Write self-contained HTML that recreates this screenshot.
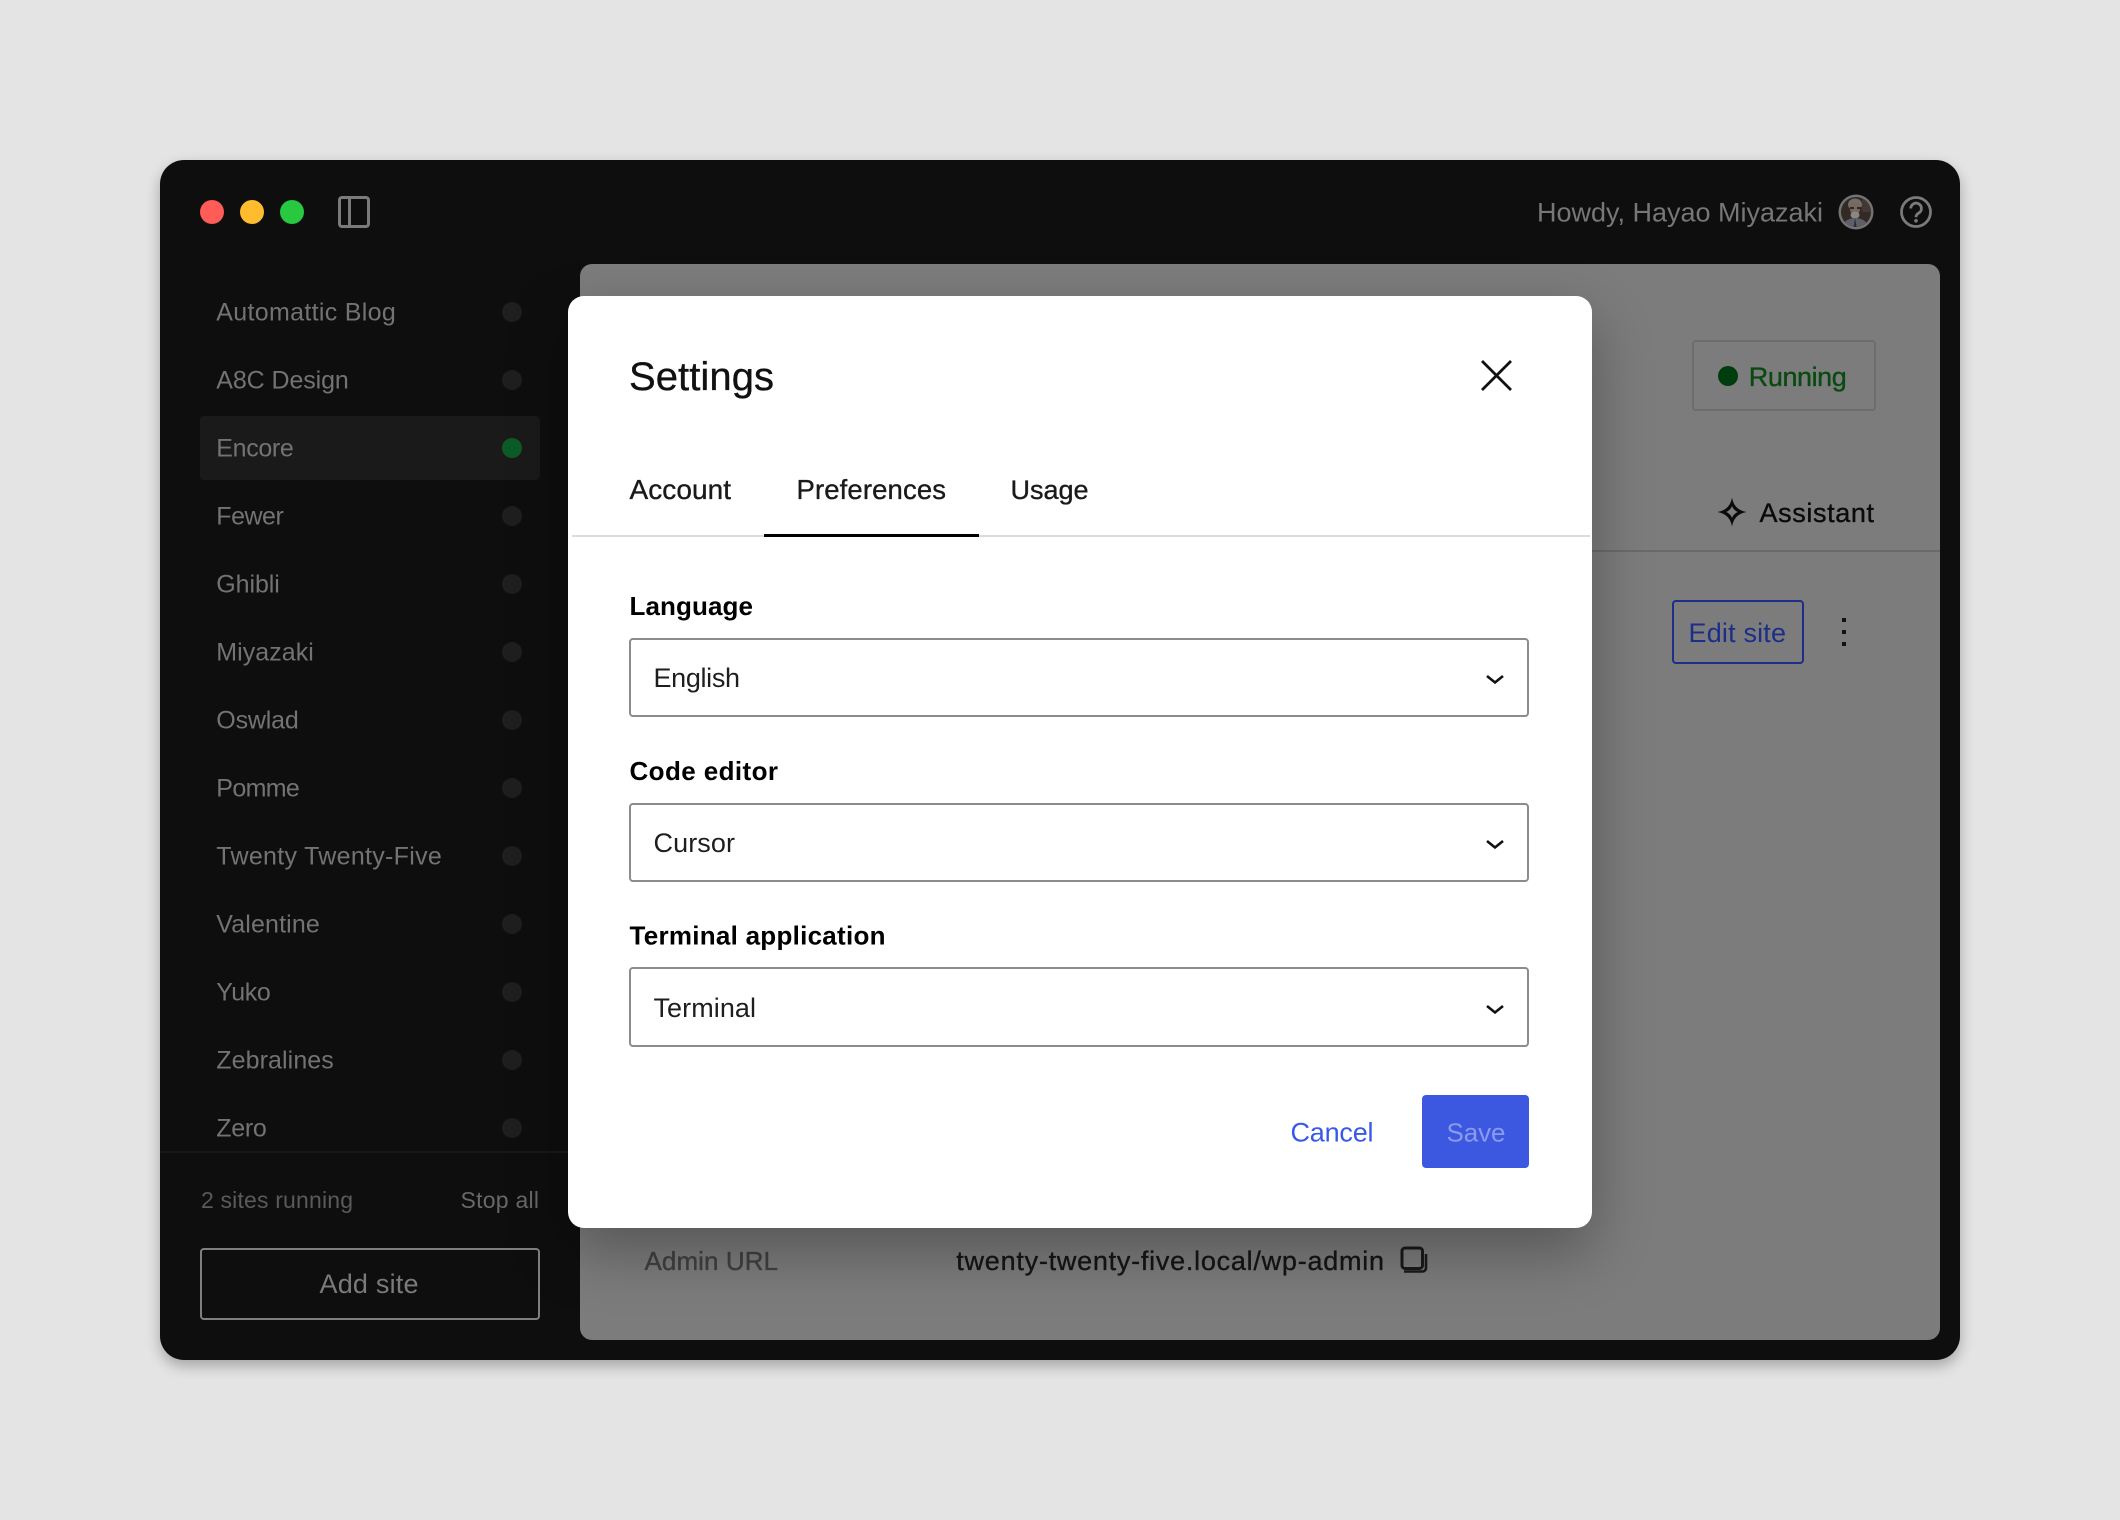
<!DOCTYPE html>
<html lang="en">
<head>
<meta charset="utf-8">
<title>Settings</title>
<style>
html,body{margin:0;padding:0;width:2120px;height:1520px;overflow:hidden;background:#e4e4e4}
div{position:absolute;box-sizing:border-box}
#win{left:160px;top:160px;width:1800px;height:1200px;background:#0e0e0e;border-radius:24px;box-shadow:0 6px 14px rgba(0,0,0,.28)}
#panel{left:580px;top:264px;width:1360px;height:1076px;background:#7c7c7c;border-radius:12px;overflow:hidden}
#active{left:200px;top:416px;width:340px;height:64px;background:#1a1a1a;border-radius:4px}
#sdiv{left:160px;top:1151px;width:410px;height:2px;background:#191919}
#add{left:200px;top:1248px;width:340px;height:72px;border:2px solid #808080;border-radius:4px}
#run{left:1692px;top:340px;width:184px;height:71px;border:2px solid #6c6c6c;border-radius:4px}
#pdiv{left:1590px;top:550px;width:350px;height:2px;background:#6a6a6a}
#edit{left:1672px;top:600px;width:132px;height:64px;border:2px solid #1c2e88;border-radius:4px}
#modal{left:568px;top:296px;width:1024px;height:932px;background:#fff;border-radius:16px;box-shadow:0 24px 60px rgba(0,0,0,.3)}
#tdiv{left:572px;top:535px;width:1018px;height:2px;background:#dcdcdc}
#tact{left:764px;top:534px;width:215px;height:3px;background:#000}
.sel{left:629px;width:900px;height:80px;border:2px solid #8c8c8c;border-radius:4px;background:#fff}
#save{left:1422px;top:1095px;width:107px;height:73px;background:#3c58e0;border-radius:4px}
svg{position:absolute;left:0;top:0}
text{font-family:"Liberation Sans",sans-serif;font-size:27px}
.s{font-size:25px;fill:#737373}
.m{stroke-width:.35;paint-order:stroke}
</style>
</head>
<body>
<div id="win"></div>
<div id="panel"></div>
<div id="active"></div>
<div id="sdiv"></div>
<div id="add"></div>
<div id="run"></div>
<div id="pdiv"></div>
<div id="edit"></div>

<svg width="2120" height="1520" viewBox="0 0 2120 1520">
  <!-- traffic lights -->
  <circle cx="212" cy="212" r="12" fill="#ff5b57"/>
  <circle cx="252" cy="212" r="12" fill="#febc2e"/>
  <circle cx="292" cy="212" r="12" fill="#28c840"/>
  <!-- sidebar toggle -->
  <rect x="339.5" y="197.5" width="29" height="29" rx="2.5" fill="none" stroke="#7a7a7a" stroke-width="3"/>
  <path d="M349.5 197v30" stroke="#7a7a7a" stroke-width="3" fill="none"/>

  <!-- sidebar -->
  <g>
    <text class="s" x="216.3" y="320.5" textLength="179.5">Automattic Blog</text>
    <text class="s" x="216.3" y="388.5" textLength="132.5">A8C Design</text>
    <text class="s" x="216.3" y="456.5" textLength="77.5">Encore</text>
    <text class="s" x="216.3" y="524.5" textLength="67.5">Fewer</text>
    <text class="s" x="216.3" y="592.5" textLength="63.5">Ghibli</text>
    <text class="s" x="216.3" y="660.5" textLength="97.5">Miyazaki</text>
    <text class="s" x="216.3" y="728.5" textLength="82.5">Oswlad</text>
    <text class="s" x="216.3" y="796.5" textLength="83.5">Pomme</text>
    <text class="s" x="216.3" y="864.5" textLength="225.5">Twenty Twenty-Five</text>
    <text class="s" x="216.3" y="932.5" textLength="103.5">Valentine</text>
    <text class="s" x="216.3" y="1000.5" textLength="54.5">Yuko</text>
    <text class="s" x="216.3" y="1068.5" textLength="117.5">Zebralines</text>
    <text class="s" x="216.3" y="1136.5" textLength="50.5">Zero</text>
  </g>
  <g fill="#1f1f1f">
    <circle cx="512" cy="312" r="10"/>
    <circle cx="512" cy="380" r="10"/>
    <circle cx="512" cy="448" r="10" fill="#0d5c27"/>
    <circle cx="512" cy="516" r="10"/>
    <circle cx="512" cy="584" r="10"/>
    <circle cx="512" cy="652" r="10"/>
    <circle cx="512" cy="720" r="10"/>
    <circle cx="512" cy="788" r="10"/>
    <circle cx="512" cy="856" r="10"/>
    <circle cx="512" cy="924" r="10"/>
    <circle cx="512" cy="992" r="10"/>
    <circle cx="512" cy="1060" r="10"/>
    <circle cx="512" cy="1128" r="10"/>
  </g>
  <text x="201" y="1208" textLength="152" style="font-size:23px;fill:#5a5a5a">2 sites running</text>
  <text x="460.5" y="1208" textLength="78.5" style="font-size:23px;fill:#686868">Stop all</text>
  <text x="319.5" y="1293" textLength="99" style="font-size:27px;fill:#7a7a7a">Add site</text>

  <!-- header right -->
  <text x="1537" y="221.5" textLength="286" style="fill:#777">Howdy, Hayao Miyazaki</text>
  <clipPath id="av"><circle cx="1856" cy="212" r="15"/></clipPath>
  <circle cx="1856" cy="212" r="17.5" fill="#737373"/>
  <g clip-path="url(#av)">
    <rect x="1840" y="196" width="32" height="32" fill="#332a25"/>
    <rect x="1862" y="198" width="10" height="14" fill="#443932"/>
    <ellipse cx="1855" cy="204.5" rx="7" ry="6" fill="#706d6a"/>
    <ellipse cx="1855" cy="209" rx="5" ry="6" fill="#7b685c"/>
    <path d="M1850 208h4M1857 208h4" stroke="#2a2a2a" stroke-width="2"/>
    <ellipse cx="1855" cy="215" rx="4.5" ry="3.5" fill="#8a8784"/>
    <path d="M1842 230c0-8 6-12 13-12s14 4 14 12z" fill="#5f6067"/>
    <path d="M1855 218l-1.800 12h4z" fill="#2c2c42"/>
  </g>
  <circle cx="1916" cy="212" r="14.5" fill="none" stroke="#7a7a7a" stroke-width="2.800"/>
  <path d="M1910.800 208.500a5.300 5.300 0 1 1 8.300 4.300c-1.900 1.300-3.100 2.100-3.100 4.500" fill="none" stroke="#7a7a7a" stroke-width="2.800"/>
  <circle cx="1916" cy="220.800" r="1.800" fill="#7a7a7a"/>

  <!-- main panel -->
  <circle cx="1728" cy="376" r="10" fill="#003d0e"/>
  <text class="m" x="1748.800" y="386" textLength="98" style="fill:#084a12;stroke:#084a12">Running</text>
  <path fill-rule="evenodd" fill="#0a0a0a" d="M1732 497.500C1733.400 505.500 1738 510.600 1746.500 512C1738 513.400 1733.400 518.500 1732 526.500C1730.600 518.500 1726 513.400 1717.500 512C1726 510.600 1730.600 505.500 1732 497.500ZM1732 506C1731 508.800 1728.800 511 1726 512C1728.800 513 1731 515.200 1732 518C1733 515.200 1735.200 513 1738 512C1735.200 511 1733 508.800 1732 506Z"/>
  <text class="m" x="1759.500" y="522" textLength="114.500" style="fill:#0a0a0a;stroke:#0a0a0a">Assistant</text>
  <text x="1688.500" y="642" textLength="97.500" style="fill:#1c2e88">Edit site</text>
  <g fill="#111"><rect x="1842" y="618" width="4" height="4"/><rect x="1842" y="630" width="4" height="4"/><rect x="1842" y="642" width="4" height="4"/></g>
  <text class="m" x="644.500" y="1270" textLength="133.500" style="font-size:26px;fill:#404040;stroke:#404040">Admin URL</text>
  <text class="m" x="956.300" y="1270" textLength="427.700" style="font-size:27px;fill:#151515;stroke:#151515">twenty-twenty-five.local/wp-admin</text>
  <rect x="1402" y="1248" width="20.500" height="20.500" rx="3" fill="none" stroke="#1a1a1a" stroke-width="3"/>
  <path d="M1426 1254V1268a3.500 3.500 0 0 1-3.500 3.500H1404" fill="none" stroke="#1a1a1a" stroke-width="2.600"/>
</svg>

<div id="modal"></div>
<div id="tdiv"></div>
<div id="tact"></div>
<div class="sel" style="top:638px;height:79px"></div>
<div class="sel" style="top:803px;height:79px"></div>
<div class="sel" style="top:967px"></div>
<div id="save"></div>

<svg width="2120" height="1520" viewBox="0 0 2120 1520">
  <text class="m" x="629" y="390" textLength="145" style="font-size:40px;fill:#111;stroke:#111">Settings</text>
  <path d="M1482 361L1511 390M1511 361L1482 390" stroke="#111" stroke-width="2.800" fill="none"/>
  <text class="m" x="629.500" y="499" textLength="101.500" style="font-size:28px;fill:#1a1a1a;stroke:#1a1a1a">Account</text>
  <text class="m" x="796.500" y="499" textLength="149.500" style="font-size:27.500px;fill:#1a1a1a;stroke:#1a1a1a">Preferences</text>
  <text class="m" x="1010.500" y="499" textLength="78" style="font-size:27px;fill:#1a1a1a;stroke:#1a1a1a">Usage</text>

  <text x="629.500" y="615" textLength="123.500" style="font-size:26px;font-weight:700;fill:#000">Language</text>
  <text x="653.500" y="687" textLength="86.500" style="fill:#1e1e1e">English</text>
  <path d="M1487 676L1495 682.500L1503 676" fill="none" stroke="#111" stroke-width="2.600"/>

  <text x="629.500" y="780" textLength="148.500" style="font-size:26px;font-weight:700;fill:#000">Code editor</text>
  <text x="653.500" y="852" textLength="81.500" style="fill:#1e1e1e">Cursor</text>
  <path d="M1487 841L1495 847.500L1503 841" fill="none" stroke="#111" stroke-width="2.600"/>

  <text x="629.500" y="944.500" textLength="256" style="font-size:26px;font-weight:700;fill:#000">Terminal application</text>
  <text x="653.500" y="1017" textLength="102.500" style="fill:#1e1e1e">Terminal</text>
  <path d="M1487 1006L1495 1012.500L1503 1006" fill="none" stroke="#111" stroke-width="2.600"/>

  <text x="1290.500" y="1141.500" textLength="83" style="fill:#3858e9">Cancel</text>
  <text x="1446.500" y="1141.500" textLength="59" style="font-size:26px;fill:#8a9bed">Save</text>
</svg>
</body>
</html>
